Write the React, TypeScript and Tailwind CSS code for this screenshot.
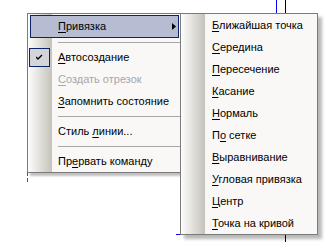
import React from "react";

type Item =
  | { sep: true }
  | {
      sep?: false;
      pre: string;
      u: string;
      post: string;
      hl?: boolean;
      checked?: boolean;
      disabled?: boolean;
      arrow?: boolean;
    };

const mainItems: Item[] = [
  { pre: "", u: "П", post: "ривязка", hl: true, arrow: true },
  { sep: true },
  { pre: "", u: "А", post: "втосоздание", checked: true },
  { pre: "", u: "С", post: "оздать отрезок", disabled: true },
  { pre: "", u: "З", post: "апомнить состояние" },
  { sep: true },
  { pre: "Стиль ", u: "л", post: "инии..." },
  { sep: true },
  { pre: "Пр", u: "е", post: "рвать команду" },
];

const subItems: Item[] = [
  { pre: "", u: "Б", post: "лижайшая точка" },
  { pre: "", u: "С", post: "ередина" },
  { pre: "", u: "П", post: "ересечение" },
  { pre: "", u: "К", post: "асание" },
  { pre: "", u: "Н", post: "ормаль" },
  { pre: "П", u: "о", post: " сетке" },
  { pre: "", u: "В", post: "ыравнивание" },
  { pre: "", u: "У", post: "гловая привязка" },
  { pre: "", u: "Ц", post: "ентр" },
  { pre: "", u: "Т", post: "очка на кривой" },
];

function Row({ item, pl }: { item: Item; pl: string }) {
  if (item.sep) {
    return (
      <div className="h-[8px] flex items-center">
        <div className="h-px bg-[#a6a6a6] ml-[30px] flex-1" />
      </div>
    );
  }
  return (
    <div className={`relative ${item.hl ? "h-[23px]" : "h-[22px]"}`}>
      {item.hl && (
        <div className="absolute left-[2px] right-[1px] top-0 bottom-0 bg-[#b6bdd2] border border-[#0a246a]" />
      )}
      {item.checked && (
        <div className="absolute left-[1px] top-[2px] w-[21px] h-[19px] bg-[#d4d5d8] border border-[#0a246a] flex items-center justify-center">
          <svg width="7" height="7" viewBox="0 0 7 7">
            <path d="M0 3 L2 5 L6 1" stroke="#000" strokeWidth="1.4" fill="none" />
          </svg>
        </div>
      )}
      <div
        className={`relative h-full flex items-center ${pl} whitespace-nowrap ${
          item.disabled ? "text-[#a7a6aa]" : "text-black"
        }`}
      >
        <span>
          {item.pre}
          <span className="underline underline-offset-[2px]">{item.u}</span>
          {item.post}
        </span>
      </div>
      {item.arrow && (
        <svg
          className="absolute right-[4px] top-[8px]"
          width="4"
          height="7"
          viewBox="0 0 4 7"
        >
          <path d="M0 0 L4 3.5 L0 7 Z" fill="#000" />
        </svg>
      )}
    </div>
  );
}

export default function App() {
  return (
    <div className="relative w-[331px] h-[242px] bg-white overflow-hidden font-['Liberation_Sans',Arial,sans-serif] text-[11px] leading-none">
      {/* background drawing lines */}
      <div className="absolute left-[276px] top-0 w-px h-[14px] bg-[#0000ff]" />
      <div className="absolute left-[285px] top-0 w-px h-[14px] bg-black" />
      <div className="absolute left-[285px] top-[234px] w-px h-[8px] bg-black" />
      <div className="absolute left-[176px] top-[234px] w-[6px] h-px bg-[#0000ff]" />
      <div className="absolute left-[27px] top-[173px] w-px h-[3px] bg-[#555]" />
      <div className="absolute left-[27px] top-[178px] w-px h-[4px] bg-[#555]" />

      {/* main menu */}
      <div className="absolute left-[27px] top-[13px] w-[154px] pt-px border border-[#7b7b7b] bg-[#f9f8f7] bg-[linear-gradient(to_right,#fdfdfc,#c5c2b9)] bg-[length:24px_100%] bg-no-repeat shadow-[3px_3px_2px_rgba(0,0,0,0.25)]">
        {mainItems.map((it, i) => (
          <Row key={i} item={it} pl="pl-[30px]" />
        ))}
      </div>

      {/* submenu */}
      <div className="absolute left-[180px] top-[13px] w-[138px] border border-[#7b7b7b] bg-[#f9f8f7] bg-[linear-gradient(to_right,#fdfdfc,#c5c2b9)] bg-[length:24px_100%] bg-no-repeat shadow-[4px_4px_3px_rgba(0,0,0,0.28)]">
        {subItems.map((it, i) => (
          <Row key={i} item={it} pl="pl-[31px]" />
        ))}
      </div>
    </div>
  );
}
